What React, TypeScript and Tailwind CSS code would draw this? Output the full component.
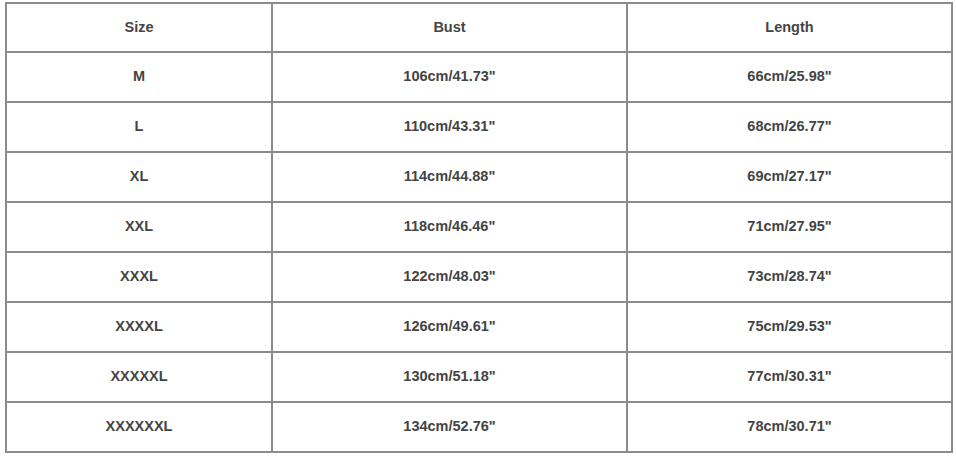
import React from 'react'

const rows = [
  ['M', '106cm/41.73"', '66cm/25.98"'],
  ['L', '110cm/43.31"', '68cm/26.77"'],
  ['XL', '114cm/44.88"', '69cm/27.17"'],
  ['XXL', '118cm/46.46"', '71cm/27.95"'],
  ['XXXL', '122cm/48.03"', '73cm/28.74"'],
  ['XXXXL', '126cm/49.61"', '75cm/29.53"'],
  ['XXXXXL', '130cm/51.18"', '77cm/30.31"'],
  ['XXXXXXL', '134cm/52.76"', '78cm/30.71"'],
]

const cell = 'border-2 border-[#8c8c8c] text-center align-middle p-0'

export default function App() {
  return (
    <div className="w-[956px] h-[456px] bg-white pt-[2px] pl-[5px] font-['Liberation_Sans',Arial,sans-serif] text-[14.5px] font-bold text-[#444]">
      <table className="w-[946px] border-collapse table-fixed">
        <colgroup>
          <col className="w-[266px]" />
          <col className="w-[355px]" />
          <col className="w-[325px]" />
        </colgroup>
        <tbody>
          <tr className="h-[49px]">
            <td className={cell}>Size</td>
            <td className={cell}>Bust</td>
            <td className={cell}>Length</td>
          </tr>
          {rows.map((r) => (
            <tr key={r[0]} className="h-[50px]">
              {r.map((v, i) => (
                <td key={i} className={cell}>{v}</td>
              ))}
            </tr>
          ))}
        </tbody>
      </table>
    </div>
  )
}
